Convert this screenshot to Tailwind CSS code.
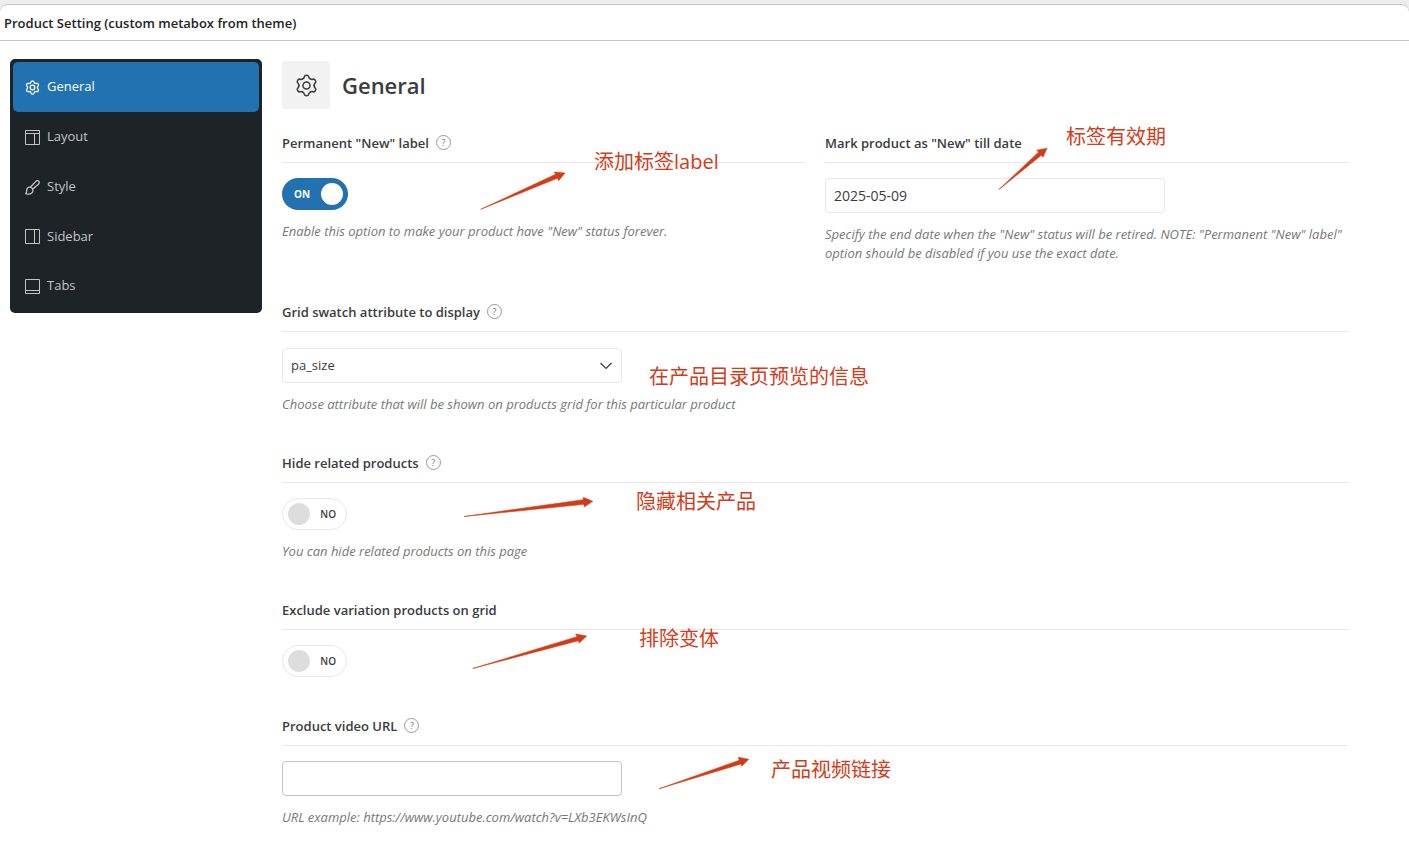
<!DOCTYPE html>
<html lang="en">
    <head>
        <meta charset="utf-8">
        <meta name="viewport" content="width=device-width, initial-scale=1">
        <title>Product Setting</title>
        <script src="https://cdn.jsdelivr.net/npm/@tailwindcss/browser@4"></script>
    </head>
    <body class="bg-white font-['Open_Sans','Noto_Sans_CJK_SC',sans-serif] text-[#3a3c3e]">
        <!--shared icons-->
        <svg class="hidden">
            <defs>
                <path id="tooth" d="M8.05 5.16C9.2 4.5 9.6 3.9 9.7 3C9.9 1.8 10.9 1.3 12 1.3S14.1 1.8 14.3 3C14.4 3.9 14.8 4.5 15.95 5.16"/>
                <symbol id="gear" viewBox="0 0 24 24">
                    <use href="#tooth"/>
                    <use href="#tooth" transform="rotate(60 12 12)"/>
                    <use href="#tooth" transform="rotate(120 12 12)"/>
                    <use href="#tooth" transform="rotate(180 12 12)"/>
                    <use href="#tooth" transform="rotate(240 12 12)"/>
                    <use href="#tooth" transform="rotate(300 12 12)"/>
                    <circle cx="12" cy="12" r="3.7"/>
                </symbol>
            </defs>
        </svg>

        <!--metabox header-->
        <div class="bg-[#eee] pt-1">
            <header class="rounded-t-lg border-y border-[#c3c4c7] bg-white px-1 pt-[9px] pb-[7px]">
                <h2 class="text-[13px] leading-[19px] font-semibold text-[#1d2327]">Product Setting (custom metabox from theme)</h2>
            </header>
        </div>

        <div class="flex items-start gap-5 pt-[18px] pr-[61px] pb-4 pl-[10px]">
            <!--tabs-->
            <nav class="flex w-[252px] flex-none flex-col rounded-[5px] bg-[#1d2327] p-[3px] pb-0.5 text-[13px] text-[#c3c4c7]">
                <a href="#general" class="flex h-[50px] items-center gap-[7px] rounded-[5px] bg-[#2271b1] px-3 text-white">
                    <svg class="size-[15px]" fill="none" stroke="currentColor" stroke-width="2" stroke-linecap="round"><use href="#gear"/></svg>
                    General
                </a>
                <a href="#layout" class="flex h-[50px] items-center gap-[7px] px-3">
                    <svg class="size-[15px]" viewBox="0 0 15 15" fill="none" stroke="currentColor"><path d="M.5 .5h14v14h-14zM.5 3.5h14M9.5 3.5v11"/></svg>
                    Layout
                </a>
                <a href="#style" class="flex h-[50px] items-center gap-[7px] px-3">
                    <svg class="size-[15px]" viewBox="0 0 15 15" fill="none" stroke="currentColor" stroke-width="1.3" stroke-linejoin="round"><path d="M5.3 7.2L10.6 1.6C11.6 .6 12.8 .4 13.7 1.1C14.6 2 14.4 3.2 13.4 4.2L7.6 9.3M5.3 7.2C3.2 6.8 1.9 8 1.8 9.8C1.8 11.3 1.6 12.4 .7 13.6C3 14.4 5.6 14.3 6.9 12.9C7.9 11.9 8.1 10.5 7.6 9.3C7.2 8.2 6.4 7.5 5.3 7.2Z"/></svg>
                    Style
                </a>
                <a href="#sidebar" class="flex h-[49px] items-center gap-[7px] px-3">
                    <svg class="size-[15px]" viewBox="0 0 15 15" fill="none" stroke="currentColor"><path d="M.5 .5h14v14h-14zM9.5 .5v14"/></svg>
                    Sidebar
                </a>
                <a href="#tabs" class="flex h-[50px] items-center gap-[7px] px-3">
                    <svg class="size-[15px]" viewBox="0 0 15 15" fill="none" stroke="currentColor"><path d="M.5 .5h14v14h-14zM.5 11.5h14"/></svg>
                    Tabs
                </a>
            </nav>

            <!--panel-->
            <main class="min-w-0 flex-1 pt-0.5">
                <div class="mb-6 flex items-center gap-3">
                    <div class="flex size-12 items-center justify-center rounded-[3px] bg-[#f2f2f2]">
                        <svg class="size-[23px]" fill="none" stroke="currentColor" stroke-width="1.6" stroke-linecap="round"><use href="#gear"/></svg>
                    </div>
                    <h1 class="text-[22px] font-semibold">General</h1>
                </div>

                <div class="grid grid-cols-2 gap-x-5 gap-y-[39px]">
                    <section class="relative">
                        <div class="flex h-[30px] items-start gap-[7px] border-b border-[#e8e8e8]">
                            <label for="permanent" class="text-[13px] leading-5 font-semibold">Permanent "New" label</label>
                            <button type="button" aria-label="Help" class="mt-0.5 size-[15px] rounded-full border border-[#999] text-[9px] leading-[13px] text-[#777]">?</button>
                        </div>
                        <div class="relative mt-[15px] flex h-8 w-[66px] items-center justify-between rounded-full bg-[#2271b1] pr-[5px] pl-3">
                            <input id="permanent" type="checkbox" checked class="absolute inset-0 size-full opacity-0">
                            <span class="text-[10px] font-bold text-white">ON</span>
                            <span class="size-[22px] rounded-full bg-white"></span>
                        </div>
                        <p class="mt-3 text-[13px] leading-[19px] text-[#777] italic">Enable this option to make your product have "New" status forever.</p>
                        <svg class="absolute top-[38px] left-[198px] h-[39px] w-[86px] fill-[#d23c19] stroke-[#d23c19]" stroke-width=".6" viewBox="480 171 86 39"><path d="M480.7 209.3L555.7 174.3L554.3 172L565 173L558.7 180.7L557.3 178.3Z"/></svg>
                        <span class="absolute top-[15px] left-[312px] text-xl whitespace-nowrap text-[#d23c19]">添加标签label</span>
                    </section>

                    <section class="relative">
                        <div class="flex h-[30px] items-start border-b border-[#e8e8e8]">
                            <label for="till" class="text-[13px] leading-5 font-semibold">Mark product as "New" till date</label>
                        </div>
                        <input id="till" type="text" value="2025-05-09" class="mt-[15px] block h-[35px] w-[340px] rounded border border-[#e8e8e8] px-2 text-sm">
                        <p class="mt-3 text-[13px] leading-[19px] text-[#777] italic">Specify the end date when the "New" status will be retired. NOTE: "Permanent "New" label" option should be disabled if you use the exact date.</p>
                        <svg class="absolute top-[15px] left-[173px] h-[42px] w-[50px] fill-[#d23c19] stroke-[#d23c19]" stroke-width=".6" viewBox="998 148 50 42"><path d="M998.7 189.7L1038.7 152L1036.7 150.3L1047 148.3L1043 157.3L1041.3 155.3Z"/></svg>
                        <span class="absolute -top-2.5 left-[241px] text-xl whitespace-nowrap text-[#d23c19]">标签有效期</span>
                    </section>

                    <section class="relative col-span-2">
                        <div class="flex h-[30px] items-start gap-[7px] border-b border-[#e8e8e8]">
                            <label for="swatch" class="text-[13px] leading-5 font-semibold">Grid swatch attribute to display</label>
                            <button type="button" aria-label="Help" class="mt-0.5 size-[15px] rounded-full border border-[#999] text-[9px] leading-[13px] text-[#777]">?</button>
                        </div>
                        <div class="relative mt-4 w-[340px]">
                            <select id="swatch" class="block h-[35px] w-full appearance-none rounded border border-[#e8e8e8] px-2 text-[13px]">
                                <option>pa_size</option>
                            </select>
                            <svg class="pointer-events-none absolute top-3 right-2.5 h-3 w-3" viewBox="0 0 12 12" fill="none" stroke="currentColor" stroke-width="1.2"><path d="M.5 3L6 8.5L11.5 3"/></svg>
                        </div>
                        <p class="mt-3 text-[13px] leading-[19px] text-[#777] italic">Choose attribute that will be shown on products grid for this particular product</p>
                        <span class="absolute top-[61px] left-[367px] text-xl whitespace-nowrap text-[#d23c19]">在产品目录页预览的信息</span>
                    </section>

                    <section class="relative col-span-2">
                        <div class="flex h-[30px] items-start gap-[7px] border-b border-[#e8e8e8]">
                            <label for="related" class="text-[13px] leading-5 font-semibold">Hide related products</label>
                            <button type="button" aria-label="Help" class="mt-0.5 size-[15px] rounded-full border border-[#999] text-[9px] leading-[13px] text-[#777]">?</button>
                        </div>
                        <div class="relative mt-[15px] flex h-8 w-[65px] items-center justify-between rounded-full border border-[#e8e8e8] pr-2.5 pl-[5px]">
                            <input id="related" type="checkbox" class="absolute inset-0 size-full opacity-0">
                            <span class="size-[22px] rounded-full bg-[#ddd]"></span>
                            <span class="text-[10px] font-semibold">NO</span>
                        </div>
                        <p class="mt-3 text-[13px] leading-[19px] text-[#777] italic">You can hide related products on this page</p>
                        <svg class="absolute top-11 left-[182px] h-5 w-[130px] fill-[#d23c19] stroke-[#d23c19]" stroke-width=".6" viewBox="464 497 130 20"><path d="M464 516.5L583.3 499.7L583.3 497.3L592.7 501.3L584.3 507L584 504.3Z"/></svg>
                        <span class="absolute top-[35px] left-[354px] text-xl whitespace-nowrap text-[#d23c19]">隐藏相关产品</span>
                    </section>

                    <section class="relative col-span-2">
                        <div class="flex h-[30px] items-start border-b border-[#e8e8e8]">
                            <label for="exclude" class="text-[13px] leading-5 font-semibold">Exclude variation products on grid</label>
                        </div>
                        <div class="relative mt-[15px] flex h-8 w-[65px] items-center justify-between rounded-full border border-[#e8e8e8] pr-2.5 pl-[5px]">
                            <input id="exclude" type="checkbox" class="absolute inset-0 size-full opacity-0">
                            <span class="size-[22px] rounded-full bg-[#ddd]"></span>
                            <span class="text-[10px] font-semibold">NO</span>
                        </div>
                        <svg class="absolute top-[33px] left-[190px] h-9 w-[116px] fill-[#d23c19] stroke-[#d23c19]" stroke-width=".6" viewBox="472 633 116 36"><path d="M472.7 668.5L577 636.7L575.7 634L586.7 636L579.3 643L578.3 640.7Z"/></svg>
                        <span class="absolute top-[25px] left-[357px] text-xl whitespace-nowrap text-[#d23c19]">排除变体</span>
                    </section>

                    <section class="relative col-span-2">
                        <div class="flex h-[30px] items-start gap-[7px] border-b border-[#e8e8e8]">
                            <label for="video" class="text-[13px] leading-5 font-semibold">Product video URL</label>
                            <button type="button" aria-label="Help" class="mt-0.5 size-[15px] rounded-full border border-[#999] text-[9px] leading-[13px] text-[#777]">?</button>
                        </div>
                        <input id="video" type="text" class="mt-[15px] block h-[35px] w-[340px] rounded border border-[#c3c4c7] px-2 text-sm">
                        <p class="mt-3 text-[13px] leading-[19px] text-[#777] italic">URL example: https://www.youtube.com/watch?v=LXb3EKWsInQ</p>
                        <svg class="absolute top-[41px] left-[376px] h-8 w-[92px] fill-[#d23c19] stroke-[#d23c19]" stroke-width=".6" viewBox="658 757 92 32"><path d="M659 788.8L739.3 760.3L738.3 757.3L748.7 759.3L741.7 766.3L741 764Z"/></svg>
                        <span class="absolute top-10 left-[489px] text-xl whitespace-nowrap text-[#d23c19]">产品视频链接</span>
                    </section>
                </div>
            </main>
        </div>
    </body>
</html>
